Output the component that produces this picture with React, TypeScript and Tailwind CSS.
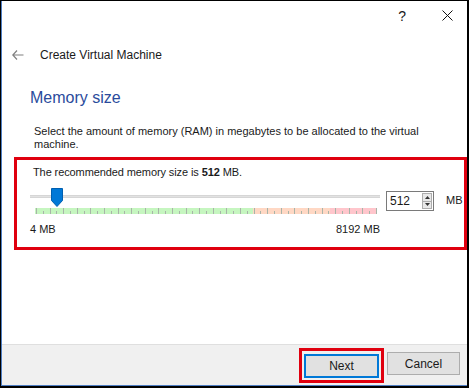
import React from "react";

const ticks = Array.from({ length: 51 }, (_, i) => i);

function Slider() {
  return (
    <div className="relative w-[352px] h-[30px]">
      {/* track */}
      <div className="absolute left-0 top-[5px] w-[350px] h-[3px] bg-[#e2e2e2] border-y border-[#d6d6d6]" />
      {/* ticks band */}
      <div className="absolute left-[5px] top-[18px] h-[6px] w-[341px] flex">
        <div className="h-full w-[218px] bg-[#c6f6c0]" />
        <div className="h-full w-[77px] bg-[#ffd8c4]" />
        <div className="h-full w-[46px] bg-[#ffc6cc]" />
      </div>
      <div className="absolute left-[6px] top-[18px] h-[6px] w-[341px]">
        {ticks.map((i) => (
          <div
            key={i}
            className="absolute bottom-0 w-px bg-[#a8b4a8]"
            style={{ left: `${i * 6.8}px`, height: i % 2 === 0 ? "6px" : "3px" }}
          />
        ))}
      </div>
      {/* thumb */}
      <svg className="absolute left-[21px] top-[-2px]" width="12" height="19" viewBox="0 0 12 19">
        <path d="M0.5 0.5 H11.5 V12.5 L6 18.5 L0.5 12.5 Z" fill="#0078d7" stroke="#005fb0" strokeWidth="1" />
      </svg>
    </div>
  );
}

function SpinBox() {
  return (
    <div className="flex items-center w-[48px] h-[20px] border border-[#7a7a7a] bg-white">
      <span className="flex-1 pl-[3px] text-[12px] leading-none">512</span>
      <div className="flex flex-col w-[10px] h-[16px] mr-[1px] border border-[#adadad] bg-[#e8e8e8]">
        <div className="flex-1 flex items-center justify-center border-b border-[#adadad]">
          <svg width="5" height="3" viewBox="0 0 5 3">
            <path d="M0 3 L2.5 0 L5 3 Z" fill="#333" />
          </svg>
        </div>
        <div className="flex-1 flex items-center justify-center">
          <svg width="5" height="3" viewBox="0 0 5 3">
            <path d="M0 0 L2.5 3 L5 0 Z" fill="#333" />
          </svg>
        </div>
      </div>
    </div>
  );
}

export default function App() {
  return (
    <div
      className="w-[469px] h-[388px] bg-black pt-px pl-px pr-[2px] pb-[2px] text-[#1a1a1a]"
      style={{ fontFamily: '"Liberation Sans", Arial, sans-serif' }}
    >
      <div className="w-full h-full flex flex-col bg-white border-l border-b border-[#4f7fc4]">
        {/* title bar */}
        <div className="h-[33px] flex items-start justify-end pt-[7px]">
          <span className="text-[14px] leading-none mr-[36px] mt-[1px]">?</span>
          <svg className="mr-[14px] mt-[2px]" width="11" height="11" viewBox="0 0 11 11">
            <path d="M0.5 0.5 L10.5 10.5 M10.5 0.5 L0.5 10.5" stroke="#111" strokeWidth="1" />
          </svg>
        </div>

        {/* wizard header */}
        <div className="h-[42px] flex items-center">
          <svg className="ml-[10px]" width="12" height="10" viewBox="0 0 12 10">
            <path d="M5 0.5 L0.8 5 L5 9.5 M0.8 5 H11.5" fill="none" stroke="#808080" strokeWidth="1.2" />
          </svg>
          <span className="ml-[16px] text-[12px]">Create Virtual Machine</span>
        </div>

        {/* page title */}
        <div className="mt-[8px] h-[28px] flex items-center pl-[28px]">
          <span className="text-[16px] text-[#2a4b9c]">Memory size</span>
        </div>

        <div className="pl-[32px] pr-[40px] pt-[13px] text-[11px] leading-[13px]">
          Select the amount of memory (RAM) in megabytes to be allocated to the virtual machine.
        </div>

        {/* highlighted group */}
        <div className="mt-[6px] ml-[12px] h-[93px] border-[3px] border-[#e0000f] flex flex-col pl-[16px]">
          <div className="pt-[6px] text-[11px] leading-[13px] tracking-[-0.1px]">
            The recommended memory size is <b>512</b> MB.
          </div>
          <div className="mt-[11px] -ml-[3px] flex items-start">
            <Slider />
            <div className="ml-[4px] mt-[1px]">
              <SpinBox />
            </div>
            <span className="ml-[12px] mt-[5px] text-[11px] leading-none">MB</span>
          </div>
          <div className="-ml-[3px] w-[350px] flex justify-between text-[11px] leading-none mt-[4px]">
            <span>4 MB</span>
            <span>8192 MB</span>
          </div>
        </div>

        <div className="flex-1" />

        {/* footer */}
        <div className="h-[41px] border-t border-[#dfdfdf] bg-[#f0f0f0] flex items-start justify-end pr-[7px] pt-[3px]">
          <div className="p-[2px] border-[3px] border-[#e0000f]">
            <button className="w-[75px] h-[24px] bg-[#e1e1e1] border-2 border-[#0078d7] text-[12px] leading-none">
              Next
            </button>
          </div>
          <button className="ml-[3px] mt-[4px] w-[73px] h-[23px] bg-[#e1e1e1] border border-[#adadad] text-[12px] leading-none">
            Cancel
          </button>
        </div>
      </div>
    </div>
  );
}
